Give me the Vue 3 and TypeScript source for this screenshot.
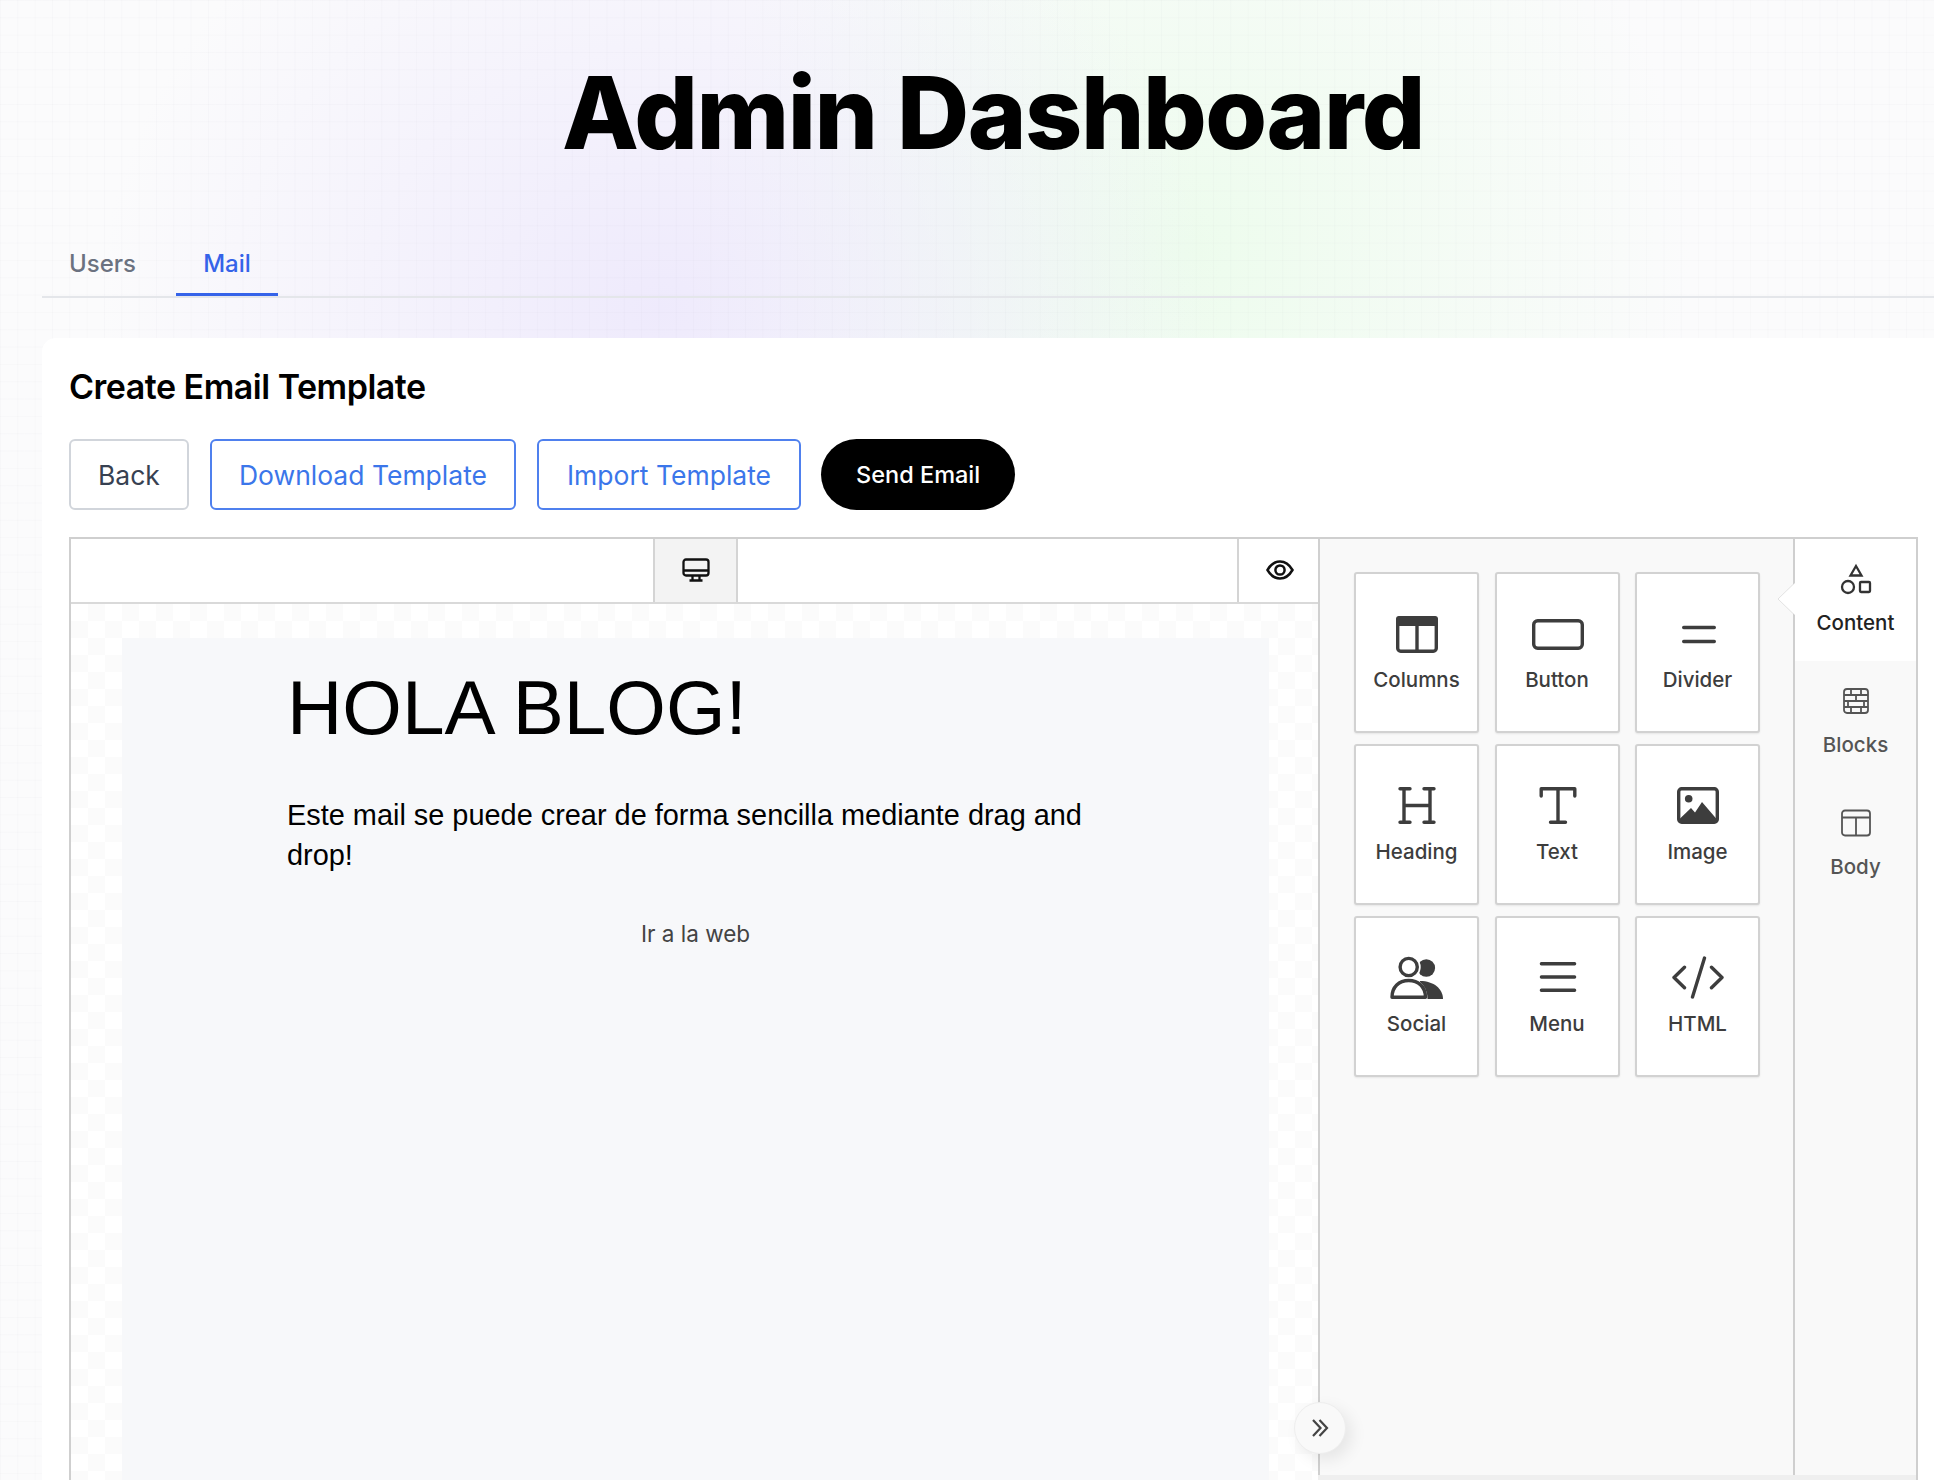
<script setup lang="ts">
interface Tool { label: string; icon: string }
const tools: Tool[] = [
  { label: 'Columns', icon: 'columns' },
  { label: 'Button', icon: 'button' },
  { label: 'Divider', icon: 'divider' },
  { label: 'Heading', icon: 'heading' },
  { label: 'Text', icon: 'text' },
  { label: 'Image', icon: 'image' },
  { label: 'Social', icon: 'social' },
  { label: 'Menu', icon: 'menu' },
  { label: 'HTML', icon: 'html' },
]
</script>

<template>
  <div class="page">
    <h1 class="title">Admin Dashboard</h1>
    <nav class="tabs">
      <a class="tab">Users</a>
      <a class="tab active">Mail</a>
    </nav>
    <section class="card">
      <h2 class="card-title">Create Email Template</h2>
      <div class="actions">
        <button class="btn back">Back</button>
        <button class="btn outline">Download Template</button>
        <button class="btn outline import">Import Template</button>
        <button class="btn send">Send Email</button>
      </div>
      <div class="editor">
        <div class="stage">
          <div class="toolbar">
            <div class="device">
              <svg width="28" height="24" viewBox="0 0 28 24" fill="none" stroke="#111" stroke-width="2.300">
                <rect x="1.500" y="1.500" width="25" height="16" rx="2.500" />
                <path d="M1.500 12.500h25M10.500 18v4M17.500 18v4M7.500 22.500h13" />
              </svg>
            </div>
            <div class="preview">
              <svg width="28" height="20" viewBox="0 0 28 20" fill="none" stroke="#111" stroke-width="2.500">
                <path d="M1.500 10C5 4 9 1.500 14 1.500S23 4 26.500 10C23 16 19 18.500 14 18.500S5 16 1.500 10Z" />
                <circle cx="14" cy="10" r="4.600" />
              </svg>
            </div>
          </div>
          <div class="canvas">
            <div class="mail">
              <div class="mail-inner">
                <div class="mail-h">HOLA BLOG!</div>
                <p class="mail-p">Este mail se puede crear de forma sencilla mediante drag and drop!</p>
              </div>
              <div class="mail-link">Ir a la web</div>
            </div>
          </div>
        </div>
        <aside class="panel">
          <div class="panel-main">
            <div class="grid">
              <div v-for="t in tools" :key="t.label" class="tool">
                <svg class="tool-ico" width="54" height="44" viewBox="0 0 54 44" fill="none" stroke="#3d3d3d" stroke-width="3.400" stroke-linecap="round" stroke-linejoin="round">
                  <template v-if="t.icon === 'columns'">
                    <rect x="7.700" y="5.700" width="38.600" height="33.600" rx="3" />
                    <rect x="6" y="4" width="42" height="10" rx="3" fill="#3d3d3d" stroke="none" />
                    <path d="M27 13.500v25" stroke-linecap="butt" />
                  </template>
                  <template v-else-if="t.icon === 'button'">
                    <rect x="3.700" y="8.700" width="48.600" height="27.600" rx="4" />
                  </template>
                  <template v-else-if="t.icon === 'divider'">
                    <path d="M12.700 15.500h30.600M12.700 29.500h30.600" />
                  </template>
                  <template v-else-if="t.icon === 'heading'">
                    <path d="M10 4.700h10M34 4.700h10M10 38.300h10M34 38.300h10M14 4.700v33.600M40 4.700v33.600M14 21.500h26" />
                  </template>
                  <template v-else-if="t.icon === 'text'">
                    <path d="M11.200 12V4.700h33.600V12M28 4.700v33.600M20.500 38.300h15" />
                  </template>
                  <template v-else-if="t.icon === 'image'">
                    <rect x="7.700" y="4.700" width="38.600" height="33.600" rx="3" />
                    <circle cx="17.700" cy="14.800" r="3.800" fill="#3d3d3d" stroke="none" />
                    <path d="M8 38.500v-3L20 24l4 4.500 7-10.500 15 17.500v3z" fill="#3d3d3d" stroke="none" />
                  </template>
                  <template v-else-if="t.icon === 'social'">
                    <circle cx="36.300" cy="12" r="8.800" fill="#3d3d3d" stroke="none" />
                    <path d="M30 25c14 0 23 8 23 18H30z" fill="#3d3d3d" stroke="none" />
                    <circle cx="18.700" cy="11" r="12" fill="#fff" stroke="none" />
                    <path d="M0 43c0-12 8-21 18.700-21s18.800 9 18.800 21z" fill="#fff" stroke="none" />
                    <circle cx="18.700" cy="11" r="8.600" />
                    <path d="M2 41.300C2 31 9 24.500 18.700 24.500S35.500 31 35.500 41.300z" />
                  </template>
                  <template v-else-if="t.icon === 'menu'">
                    <path d="M11.400 7.700h33.200M11.400 21h33.200M11.400 34.300h33.200" />
                  </template>
                  <template v-else-if="t.icon === 'html'">
                    <path d="M13.500 11.200L3 21.500l10.500 10.300M40.500 11.200L51 21.500 40.500 31.800M33.500 2l-12 39" />
                  </template>
                </svg>
                <span class="tool-label">{{ t.label }}</span>
              </div>
            </div>
          </div>
          <div class="side">
            <div class="side-tab on">
              <svg width="32" height="32" viewBox="0 0 32 32" fill="none" stroke="#333" stroke-width="2.300">
                <path d="M16 3l5.500 9.500h-11z" />
                <circle cx="8" cy="24" r="6" />
                <rect x="20" y="19" width="10" height="10" rx="1" />
              </svg>
              <span>Content</span>
            </div>
            <div class="side-tab">
              <svg width="28" height="32" viewBox="0 0 28 32" fill="none" stroke="#555" stroke-width="1.800">
                <rect x="2" y="4" width="24" height="24" rx="3" />
                <path d="M2 10h24M2 16h24M2 22h24M9 4v6M19 4v6M14 10v6M6 16v6M22 16v6M9 22v6M19 22v6" />
              </svg>
              <span>Blocks</span>
            </div>
            <div class="side-tab">
              <svg width="32" height="32" viewBox="0 0 32 32" fill="none" stroke="#555" stroke-width="1.800">
                <rect x="2" y="3.500" width="28" height="25" rx="3" />
                <path d="M2 10.500h28M16 10.500v18" />
              </svg>
              <span>Body</span>
            </div>
            <svg class="notch" width="18" height="32" viewBox="0 0 18 32">
              <path d="M18 0L1 16l17 16z" fill="#fff" />
              <path d="M16 1.500L1 16l15 14.500" fill="none" stroke="#e2e2e2" stroke-width="1" />
            </svg>
          </div>
          <div class="collapse">
            <svg width="20" height="20" viewBox="0 0 20 20" fill="none" stroke="#444" stroke-width="2.200">
              <path d="M3 2l7.500 8L3 18M9.500 2l7.500 8-7.500 8" />
            </svg>
          </div>
        </aside>
      </div>
    </section>
  </div>
</template>

<style>
html, body { margin: 0; padding: 0; background: #fff; }
</style>

<style scoped>
.page {
  width: 1934px;
  height: 1480px;
  overflow: hidden;
  box-sizing: border-box;
  padding-left: 42px;
  font-family: Inter, "Liberation Sans", sans-serif;
  background-color: #fbfbfc;
  background-image:
    linear-gradient(rgba(110, 110, 140, 0.028) 1px, transparent 1px),
    linear-gradient(90deg, rgba(110, 110, 140, 0.028) 1px, transparent 1px),
    radial-gradient(ellipse 560px 500px at 660px 310px, rgba(236, 231, 252, 0.85), transparent 100%),
    radial-gradient(ellipse 500px 500px at 1190px 250px, rgba(236, 252, 236, 0.95), transparent 100%);
  background-size: 17.330px 17.330px, 17.330px 17.330px, 100% 100%, 100% 100%;
}
.title {
  margin: 0;
  padding: 53px 0 0 10px;
  text-align: center;
  font-size: 100px;
  line-height: 120px;
  font-weight: 800;
  letter-spacing: -1.500px;
  color: #000;
}
.tabs {
  margin-top: 63px;
  display: flex;
  height: 60px;
  border-bottom: 2px solid #e4e6ea;
}
.tab {
  width: 102px;
  box-sizing: border-box;
  text-align: center;
  padding-top: 12px;
  font-size: 24px;
  line-height: 32px;
  font-weight: 500;
  color: #6b7280;
}
.tab:first-child { width: 134px; padding-left: 27px; text-align: left; }
.tab.active {
  color: #3563e9;
  border-bottom: 3px solid #3563e9;
  height: 60px;
}
.card {
  margin-top: 40px;
  width: 1930px;
  height: 1200px;
  background: #fff;
  border-radius: 14px;
  box-sizing: border-box;
  padding: 25px 0 0 27px;
}
.card-title {
  margin: 0;
  font-size: 34px;
  line-height: 48px;
  font-weight: 600;
  letter-spacing: -0.500px;
  color: #000;
}
.actions {
  margin-top: 28px;
  display: flex;
  gap: 21px;
  height: 71px;
}
.btn {
  box-sizing: border-box;
  font-family: inherit;
  font-size: 26.500px;
  background: #fff;
  padding: 0 27px;
  border-radius: 6px;
  height: 71px;
}
.back { border: 2px solid #d1d5db; color: #374151; }
.outline { border: 2px solid #4f80ee; color: #3b76ea; }
.import { padding: 0 28px; }
.send {
  background: #000;
  border: 0;
  color: #fff;
  border-radius: 36px;
  font-size: 23.500px;
  font-weight: 500;
  padding: 0 35px;
  margin-left: -1px;
}
.editor {
  margin-top: 27px;
  display: flex;
  width: 1849px;
  height: 960px;
  box-sizing: border-box;
  border: 2px solid #cfcfcf;
  border-bottom: 0;
}
.stage {
  width: 1247px;
  flex: none;
  display: flex;
  flex-direction: column;
}
.toolbar {
  height: 63px;
  display: flex;
  background: #fff;
  border-bottom: 2px solid #d9d9d9;
  flex: none;
}
.device {
  margin-left: 582px;
  width: 85px;
  box-sizing: border-box;
  background: #f3f3f3;
  border-left: 2px solid #d4d4d4;
  border-right: 2px solid #d4d4d4;
  padding-bottom: 2px;
  display: flex;
  align-items: center;
  justify-content: center;
}
.preview {
  margin-left: auto;
  width: 81px;
  box-sizing: border-box;
  border-left: 2px solid #d4d4d4;
  padding: 0 0 2px 2px;
  display: flex;
  align-items: center;
  justify-content: center;
}
.canvas {
  flex: 1;
  padding: 34px 49px 0 51px;
  background-color: #fff;
  background-image:
    linear-gradient(45deg, #fbfbfb 25%, transparent 25%, transparent 75%, #fbfbfb 75%),
    linear-gradient(45deg, #fbfbfb 25%, transparent 25%, transparent 75%, #fbfbfb 75%);
  background-size: 34px 34px;
  background-position: 0 0, 17px 17px;
}
.mail {
  height: 100%;
  background: #f7f8fa;
  padding-top: 26px;
  box-sizing: border-box;
}
.mail-inner { padding: 0 175px 0 165px; }
.mail-h {
  font-family: "Liberation Sans", Arial, sans-serif;
  font-size: 76.600px;
  line-height: 88px;
  color: #000;
}
.mail-p {
  margin: 43px 0 0;
  font-family: "Liberation Sans", Arial, sans-serif;
  font-size: 28.900px;
  line-height: 40px;
  color: #000;
}
.mail-link {
  margin-top: 43px;
  text-align: center;
  font-size: 22.500px;
  line-height: 32px;
  color: #444;
}
.panel {
  flex: 1;
  display: flex;
  position: relative;
  background: #f9f9f9;
  border-left: 2px solid #d0d0d0;
  height: 936px;
  box-shadow: 0 6px 0 #efefef;
}
.panel-main {
  flex: 1;
  padding: 33px 0 0 34px;
}
.grid {
  display: grid;
  grid-template-columns: repeat(3, 125px);
  grid-auto-rows: 161px;
  column-gap: 15.500px;
  row-gap: 11px;
}
.tool {
  box-sizing: border-box;
  background: #fff;
  border: 2px solid #d2d2d2;
  border-radius: 3px;
  box-shadow: 0 1px 2px rgba(0, 0, 0, 0.08);
  display: flex;
  flex-direction: column;
  align-items: center;
  padding-top: 38px;
}
.tool-ico { flex: none; }
.tool-label {
  margin-top: 10px;
  font-size: 20.500px;
  line-height: 28px;
  font-weight: 500;
  color: #3d3d3d;
}
.side {
  width: 123px;
  flex: none;
  border-left: 2px solid #cfcfcf;
  position: relative;
  box-sizing: border-box;
}
.side-tab {
  display: flex;
  flex-direction: column;
  align-items: center;
  height: 122px;
  box-sizing: border-box;
  padding-top: 24px;
  font-size: 20.500px;
  line-height: 28px;
  font-weight: 500;
  color: #555;
}
.side-tab svg { margin-bottom: 14px; flex: none; }
.side-tab.on {
  background: #fff;
  color: #222;
}
.notch {
  position: absolute;
  left: -18px;
  top: 44px;
}
.collapse {
  position: absolute;
  left: -26px;
  top: 863px;
  width: 52px;
  height: 52px;
  box-sizing: border-box;
  border-radius: 50%;
  background: #f9f9f9;
  border: 1px solid #eee;
  box-shadow: 6px 6px 16px rgba(0, 0, 0, 0.08);
  display: flex;
  align-items: center;
  justify-content: center;
}
</style>
